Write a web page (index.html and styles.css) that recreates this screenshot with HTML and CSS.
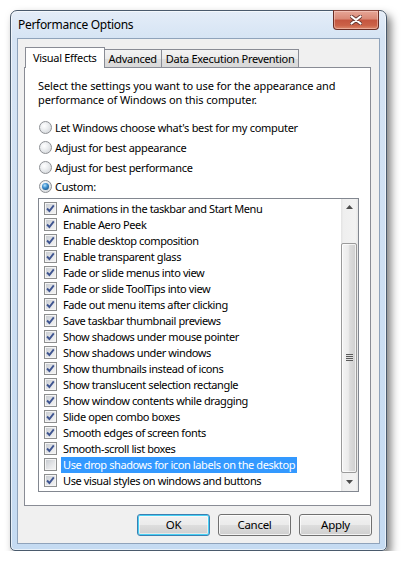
FILE: index.html
```html
<!DOCTYPE html>
<html>
<head>
<meta charset="utf-8">
<title>Performance Options</title>
<link rel="stylesheet" href="styles.css">
</head>
<body>
<div class="window">
  <div class="titlebar">
    <span class="title">Performance Options</span>
    <div class="close">
      <svg width="12" height="10" viewBox="0 0 12 10"><path d="M1.5 1.5 L10.5 8.5 M10.5 1.5 L1.5 8.5" stroke="#6b3a33" stroke-width="4" stroke-linecap="round"/><path d="M1.5 1.5 L10.5 8.5 M10.5 1.5 L1.5 8.5" stroke="#fff" stroke-width="2.2" stroke-linecap="round"/></svg>
    </div>
  </div>
  <div class="client">
    <div class="tabs">
      <div class="tab active">Visual Effects</div>
      <div class="tab">Advanced</div>
      <div class="tab">Data Execution Prevention</div>
    </div>
    <div class="panel">
      <p class="intro">Select the settings you want to use for the appearance and<br>performance of Windows on this computer.</p>
      <div class="radios">
        <div class="radio-row"><span class="radio"></span>Let Windows choose what's best for my computer</div>
        <div class="radio-row"><span class="radio"></span>Adjust for best appearance</div>
        <div class="radio-row"><span class="radio"></span>Adjust for best performance</div>
        <div class="radio-row"><span class="radio checked"></span>Custom:</div>
      </div>
      <div class="list">
        <div class="items">
          <div class="item"><span class="cb"><svg width="11" height="11" viewBox="0 0 11 11"><path d="M2 5.5 L4.4 8 L8.8 2.4" fill="none" stroke="#3f5590" stroke-width="1.9"/></svg></span><span class="label">Animations in the taskbar and Start Menu</span></div>
          <div class="item"><span class="cb"><svg width="11" height="11" viewBox="0 0 11 11"><path d="M2 5.5 L4.4 8 L8.8 2.4" fill="none" stroke="#3f5590" stroke-width="1.9"/></svg></span><span class="label">Enable Aero Peek</span></div>
          <div class="item"><span class="cb"><svg width="11" height="11" viewBox="0 0 11 11"><path d="M2 5.5 L4.4 8 L8.8 2.4" fill="none" stroke="#3f5590" stroke-width="1.9"/></svg></span><span class="label">Enable desktop composition</span></div>
          <div class="item"><span class="cb"><svg width="11" height="11" viewBox="0 0 11 11"><path d="M2 5.5 L4.4 8 L8.8 2.4" fill="none" stroke="#3f5590" stroke-width="1.9"/></svg></span><span class="label">Enable transparent glass</span></div>
          <div class="item"><span class="cb"><svg width="11" height="11" viewBox="0 0 11 11"><path d="M2 5.5 L4.4 8 L8.8 2.4" fill="none" stroke="#3f5590" stroke-width="1.9"/></svg></span><span class="label">Fade or slide menus into view</span></div>
          <div class="item"><span class="cb"><svg width="11" height="11" viewBox="0 0 11 11"><path d="M2 5.5 L4.4 8 L8.8 2.4" fill="none" stroke="#3f5590" stroke-width="1.9"/></svg></span><span class="label">Fade or slide ToolTips into view</span></div>
          <div class="item"><span class="cb"><svg width="11" height="11" viewBox="0 0 11 11"><path d="M2 5.5 L4.4 8 L8.8 2.4" fill="none" stroke="#3f5590" stroke-width="1.9"/></svg></span><span class="label">Fade out menu items after clicking</span></div>
          <div class="item"><span class="cb"><svg width="11" height="11" viewBox="0 0 11 11"><path d="M2 5.5 L4.4 8 L8.8 2.4" fill="none" stroke="#3f5590" stroke-width="1.9"/></svg></span><span class="label">Save taskbar thumbnail previews</span></div>
          <div class="item"><span class="cb"><svg width="11" height="11" viewBox="0 0 11 11"><path d="M2 5.5 L4.4 8 L8.8 2.4" fill="none" stroke="#3f5590" stroke-width="1.9"/></svg></span><span class="label">Show shadows under mouse pointer</span></div>
          <div class="item"><span class="cb"><svg width="11" height="11" viewBox="0 0 11 11"><path d="M2 5.5 L4.4 8 L8.8 2.4" fill="none" stroke="#3f5590" stroke-width="1.9"/></svg></span><span class="label">Show shadows under windows</span></div>
          <div class="item"><span class="cb"><svg width="11" height="11" viewBox="0 0 11 11"><path d="M2 5.5 L4.4 8 L8.8 2.4" fill="none" stroke="#3f5590" stroke-width="1.9"/></svg></span><span class="label">Show thumbnails instead of icons</span></div>
          <div class="item"><span class="cb"><svg width="11" height="11" viewBox="0 0 11 11"><path d="M2 5.5 L4.4 8 L8.8 2.4" fill="none" stroke="#3f5590" stroke-width="1.9"/></svg></span><span class="label">Show translucent selection rectangle</span></div>
          <div class="item"><span class="cb"><svg width="11" height="11" viewBox="0 0 11 11"><path d="M2 5.5 L4.4 8 L8.8 2.4" fill="none" stroke="#3f5590" stroke-width="1.9"/></svg></span><span class="label">Show window contents while dragging</span></div>
          <div class="item"><span class="cb"><svg width="11" height="11" viewBox="0 0 11 11"><path d="M2 5.5 L4.4 8 L8.8 2.4" fill="none" stroke="#3f5590" stroke-width="1.9"/></svg></span><span class="label">Slide open combo boxes</span></div>
          <div class="item"><span class="cb"><svg width="11" height="11" viewBox="0 0 11 11"><path d="M2 5.5 L4.4 8 L8.8 2.4" fill="none" stroke="#3f5590" stroke-width="1.9"/></svg></span><span class="label">Smooth edges of screen fonts</span></div>
          <div class="item"><span class="cb"><svg width="11" height="11" viewBox="0 0 11 11"><path d="M2 5.5 L4.4 8 L8.8 2.4" fill="none" stroke="#3f5590" stroke-width="1.9"/></svg></span><span class="label">Smooth-scroll list boxes</span></div>
          <div class="item"><span class="cb"></span><span class="label selected">Use drop shadows for icon labels on the desktop</span></div>
          <div class="item"><span class="cb"><svg width="11" height="11" viewBox="0 0 11 11"><path d="M2 5.5 L4.4 8 L8.8 2.4" fill="none" stroke="#3f5590" stroke-width="1.9"/></svg></span><span class="label">Use visual styles on windows and buttons</span></div>
        </div>
        <div class="scrollbar">
          <div class="sb-btn"><svg width="7" height="4" viewBox="0 0 7 4"><path d="M0 4 L3.5 0 L7 4 Z" fill="#4d4d4d"/></svg></div>
          <div class="sb-track">
            <div class="thumb"><span class="grip"></span></div>
          </div>
          <div class="sb-btn"><svg width="7" height="4" viewBox="0 0 7 4"><path d="M0 0 L3.5 4 L7 0 Z" fill="#4d4d4d"/></svg></div>
        </div>
      </div>
    </div>
    <div class="buttons">
      <div class="btn default">OK</div>
      <div class="btn">Cancel</div>
      <div class="btn">Apply</div>
    </div>
  </div>
</div>
</body>
</html>
```
FILE: styles.css
```css
* { box-sizing: border-box; }
html, body { margin: 0; background: #fff; }
body {
  padding: 10px 0 0 10px;
  font-family: "Noto Sans", sans-serif;
  font-size: 11px;
  letter-spacing: -0.3px;
  color: #000;
}
.window {
  width: 377px;
  height: 541px;
  border: 1px solid #4a5a6c;
  border-radius: 7px 7px 5px 5px;
  background: linear-gradient(#e4edf8 0, #d6e4f4 27px, #c5dbf2 100%);
  box-shadow: inset 0 0 0 1px rgba(255,255,255,.6), 4px 5px 9px rgba(0,0,0,.5);
  display: flex;
  flex-direction: column;
}
.titlebar {
  height: 27px;
  display: flex;
  align-items: flex-start;
  padding-left: 7px;
}
.title {
  padding-top: 6px;
  line-height: 15px;
  font-size: 12px;
  color: #000;
}
.close {
  margin-left: auto;
  margin-right: 7px;
  margin-top: -1px;
  width: 46px;
  height: 20px;
  border: 1px solid #6a2d24;
  border-top-color: #8a4a40;
  border-radius: 0 0 4px 4px;
  background: linear-gradient(#e6a697 0, #d98875 45%, #c4553f 50%, #cb6248 80%, #dc8a6e 100%);
  box-shadow: inset 0 0 0 1px rgba(255,220,210,.45);
  display: flex;
  align-items: center;
  justify-content: center;
}
.client {
  margin: 0 6px;
  height: 506px;
  border: 1px solid #8fa3bb;
  background: #f0f0f0;
  display: flex;
  flex-direction: column;
}
.tabs {
  display: flex;
  align-items: flex-end;
  height: 28px;
  padding: 8px 0 0 7px;
}
.tab {
  height: 18px;
  border: 1px solid #898c95;
  border-bottom: 0;
  margin-left: -1px;
  padding: 0 4px;
  line-height: 18px;
  background: linear-gradient(#f3f3f3 0, #ebebeb 50%, #dedede 51%, #d9d9d9 100%);
}
.tab.active {
  height: 21px;
  margin-bottom: -1px;
  margin-left: 0;
  padding: 0 7px;
  line-height: 19px;
  background: #fff;
  position: relative;
  z-index: 1;
}
.panel {
  margin: 0 8px 0 6px;
  height: 439px;
  border: 1px solid #898c95;
  background: #fff;
  padding: 11px 12px 0 13px;
}
.intro {
  margin: 0;
  line-height: 14px;
  white-space: nowrap;
  letter-spacing: -0.1px;
}
.radios {
  margin-top: 11px;
}
.radio-row {
  height: 19.7px;
  display: flex;
  align-items: center;
}
.radio {
  width: 13px;
  height: 13px;
  border-radius: 50%;
  border: 1px solid #8d9094;
  background: radial-gradient(circle at 38% 35%, #ffffff 0, #eceef0 40%, #cdd0d4 100%);
  margin: 0 3px 0 1px;
  display: flex;
  align-items: center;
  justify-content: center;
}
.radio.checked::after {
  content: "";
  width: 7px;
  height: 7px;
  border-radius: 50%;
  background: radial-gradient(circle at 40% 35%, #b9e4fb 0, #3d8fd0 40%, #18507f 85%);
}
.list {
  margin-top: 1px;
  width: 321px;
  height: 294px;
  border: 1px solid #828790;
  display: flex;
}
.items {
  flex: 1;
  padding: 2px 0 0 5px;
}
.item {
  height: 16px;
  display: flex;
  align-items: center;
}
.cb {
  width: 13px;
  height: 13px;
  border: 1px solid #8e8f8f;
  background: linear-gradient(135deg, #c3c7cd 0, #e6e7e9 60%, #f6f6f6 100%);
  box-shadow: inset 0 0 0 1px #f4f4f4;
  margin-right: 4px;
  display: flex;
  align-items: center;
  justify-content: center;
}
.label {
  padding: 0 2px;
  line-height: 16px;
  white-space: nowrap;
  letter-spacing: -0.4px;
}
.label.selected {
  background: #3399ff;
  color: #fff;
}
.scrollbar {
  width: 17px;
  display: flex;
  flex-direction: column;
  background: linear-gradient(90deg, #e3e3e3 0, #efefef 15%, #f2f2f2 85%, #e6e6e6 100%);
}
.sb-btn {
  height: 17px;
  display: flex;
  align-items: center;
  justify-content: center;
}
.sb-track {
  flex: 1;
  display: flex;
  flex-direction: column;
  padding: 0 1px 1px 0;
}
.thumb {
  margin-top: auto;
  height: 230px;
  border: 1px solid #9a9a9a;
  border-radius: 2px;
  background: linear-gradient(90deg, #f4f4f4 0, #ececec 45%, #dcdcdc 55%, #cfcfcf 100%);
  box-shadow: inset 0 0 0 1px rgba(255,255,255,.7);
  display: flex;
  align-items: center;
  justify-content: center;
}
.grip {
  width: 7px;
  height: 7px;
  background: repeating-linear-gradient(#5a5a5a 0, #5a5a5a 1px, #e0e0e0 1px, #e0e0e0 2px);
}
.buttons {
  display: flex;
  justify-content: flex-end;
  gap: 8px;
  margin-top: 8px;
  padding-right: 7px;
}
.btn {
  width: 73px;
  height: 22px;
  border: 1px solid #707070;
  border-radius: 3px;
  background: linear-gradient(#f2f2f2 0, #ebebeb 48%, #dddddd 52%, #cfcfcf 100%);
  box-shadow: inset 0 0 0 1px rgba(255,255,255,.75);
  text-align: center;
  line-height: 20px;
  font-size: 11.5px;
}
.btn.default {
  border-color: #3c7fb1;
  box-shadow: inset 0 0 0 1px #48d0f4, inset 0 0 0 2px rgba(255,255,255,.5);
}
```
